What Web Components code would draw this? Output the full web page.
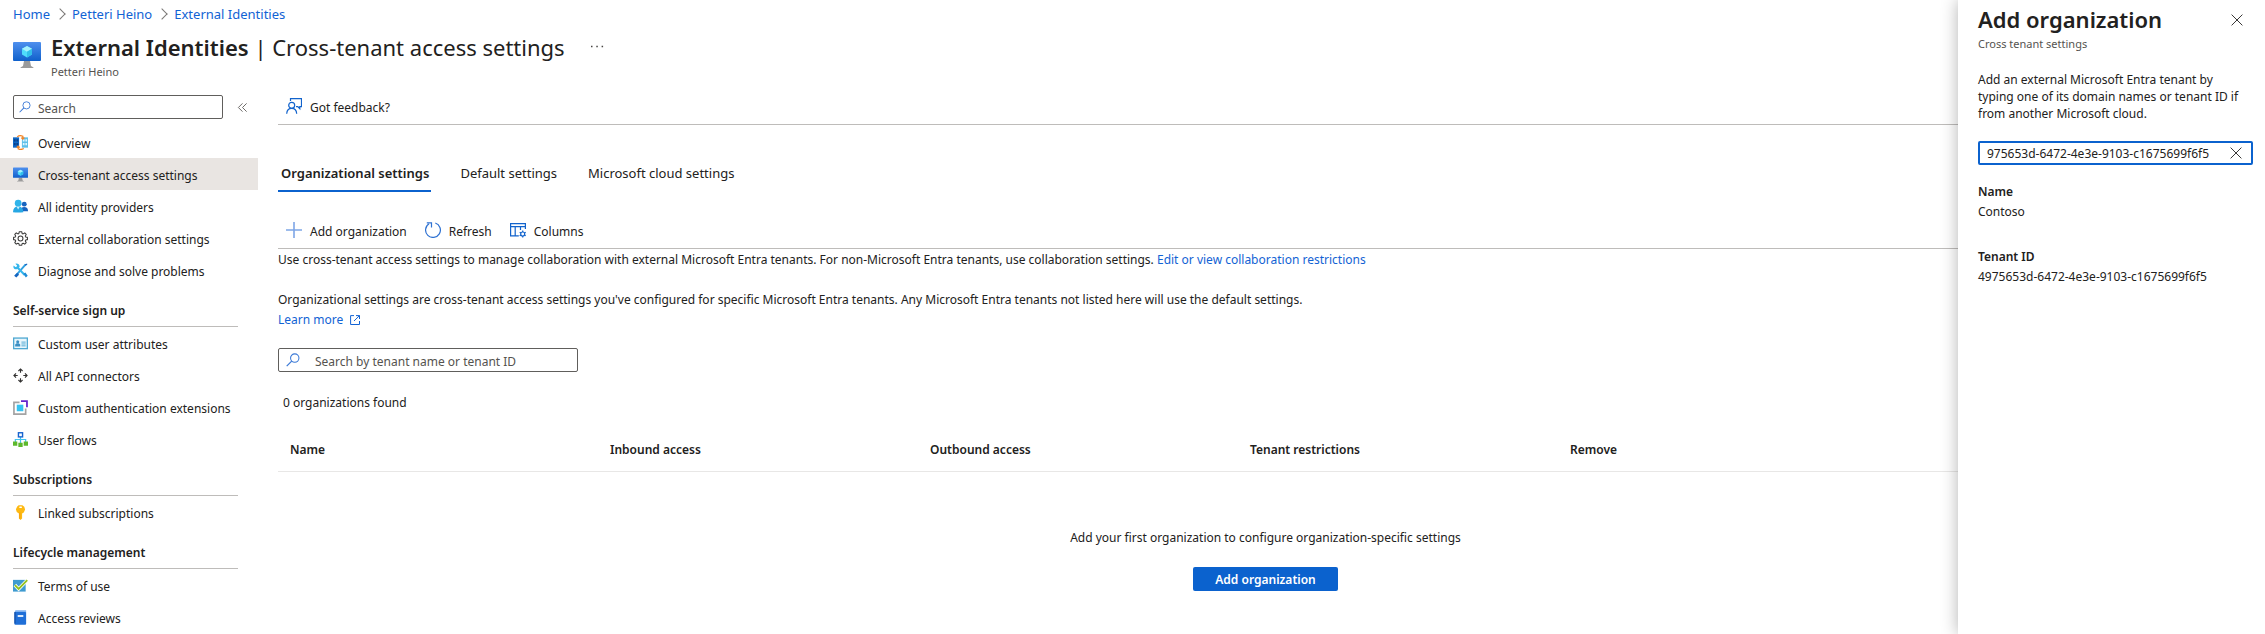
<!DOCTYPE html>
<html lang="en">
<head>
<meta charset="utf-8">
<meta name="viewport" content="width=device-width, initial-scale=1">
<title>External Identities | Cross-tenant access settings</title>
<style>
  :root { --accent: #0b62ce; --text: #222120; --muted: #55534f; --line: #bebcba; --link: #1263d4; }
  body { margin: 0; background: #fff; color: var(--text); font: 12px/20px "Noto Sans", "Open Sans", sans-serif; }
</style>
</head>
<body>
<az-portal>
  <az-breadcrumb slot="trail">
    <a href="#home">Home</a>
    <a href="#tenant">Petteri Heino</a>
    <a href="#identities">External Identities</a>
  </az-breadcrumb>

  <az-blade-header slot="header" name="External Identities" page="Cross-tenant access settings">Petteri Heino</az-blade-header>

  <az-sidebar slot="nav">
    <az-nav-item icon="overview">Overview</az-nav-item>
    <az-nav-item icon="monitor" selected>Cross-tenant access settings</az-nav-item>
    <az-nav-item icon="people">All identity providers</az-nav-item>
    <az-nav-item icon="gear">External collaboration settings</az-nav-item>
    <az-nav-item icon="tools">Diagnose and solve problems</az-nav-item>
    <az-nav-section heading="Self-service sign up">
      <az-nav-item icon="card">Custom user attributes</az-nav-item>
      <az-nav-item icon="arrows">All API connectors</az-nav-item>
      <az-nav-item icon="extension">Custom authentication extensions</az-nav-item>
      <az-nav-item icon="flow">User flows</az-nav-item>
    </az-nav-section>
    <az-nav-section heading="Subscriptions">
      <az-nav-item icon="key">Linked subscriptions</az-nav-item>
    </az-nav-section>
    <az-nav-section heading="Lifecycle management">
      <az-nav-item icon="terms">Terms of use</az-nav-item>
      <az-nav-item icon="book">Access reviews</az-nav-item>
    </az-nav-section>
  </az-sidebar>

  <az-command-bar>
    <az-command icon="feedback">Got feedback?</az-command>
  </az-command-bar>
  <az-tabs></az-tabs>
  <az-command-bar>
    <az-command icon="plus">Add organization</az-command>
    <az-command icon="refresh">Refresh</az-command>
    <az-command icon="columns">Columns</az-command>
  </az-command-bar>
  <az-organizations></az-organizations>

  <az-panel slot="panel" heading="Add organization" subheading="Cross tenant settings">
    <az-tenant-lookup></az-tenant-lookup>
    <az-field label="Name">Contoso</az-field>
    <az-field label="Tenant ID">4975653d-6472-4e3e-9103-c1675699f6f5</az-field>
  </az-panel>
</az-portal>

<script>
/* Each entry: viewBox and the shapes drawn in it. */
const ICONS = {
  'monitor': ['0 0 28 28', `
    <defs><linearGradient id="m" x1="0" y1="0" x2="0" y2="1"><stop offset="0" stop-color="#4f90ee"/><stop offset="1" stop-color="#0f60cb"/></linearGradient></defs>
    <path d="M11 20h6l1 5 2.500 1.500v.5h-13v-.5l2.500-1.500z" fill="#9b9b9b"/>
    <rect x="0" y="1" width="28" height="19" rx="1" fill="url(#m)"/>
    <path d="M14 5l5 2.800v5.800l-5 2.900-5-2.900V7.800z" fill="#4fdcfb"/>
    <path d="M14 5l5 2.800-5 2.900-5-2.900z" fill="#a6f1fd"/>
    <path d="M14 10.700l5-2.900v5.800l-5 2.900z" fill="#32bfea"/>`],
  'overview': ['0 0 16 16', `
    <rect x="0" y="2.500" width="6.500" height="11" fill="#0f67c4"/><rect x="9.500" y="2.500" width="6.500" height="11" fill="#5fbfe9"/>
    <path d="M1 4.500h1.800v2.500H1zM3.700 4.500h1.800v2.500H3.700zM1 8.500h1.800V11H1zM3.700 8.500h1.800V11H3.700z" fill="#0a3f86"/>
    <path d="M10.500 4.500h1.800v2.500h-1.800zM13.200 4.500H15v2.500h-1.800zM10.500 8.500h1.800V11h-1.800zM13.200 8.500H15V11h-1.800z" fill="#dff5fd"/>
    <path d="M4.500 2Q7 -.2 10.500 1.300V4M8.800 2.800l1.700 1.600 1.700-1.600M11.500 14.500Q8.500 16.300 5.500 14.700V12M3.800 13.500l1.700-1.700 1.700 1.700" fill="none" stroke="#f58220" stroke-width="1.300"/>`],
  'people': ['0 0 16 16', `
    <circle cx="12" cy="5.500" r="2.600" fill="#1764c0"/><path d="M8 13q0-4.500 4-4.500t4 4.500z" fill="#1764c0"/>
    <circle cx="5.500" cy="4.500" r="3.600" fill="#30b4ea"/><path d="M0 14q0-6 5.500-6T11 14q-5.500 1-11 0z" fill="#27a7e3"/>
    <path d="M3.800 8.300l1.700 3 1.700-3z" fill="#c8f0fc"/>`],
  'gear': ['0 0 16 16', `
    <path d="M6.700.7h2.600l.4 1.900 1.100.5 1.700-1.100 1.600 1.700-1 1.600.5 1.200 1.800.3v2.400l-1.800.4-.5 1.100 1 1.700-1.600 1.600-1.700-1-1.100.5-.4 1.800H6.700l-.4-1.800-1.100-.5-1.700 1-1.600-1.600 1-1.700-.5-1.100-1.800-.4V6.800l1.800-.3.500-1.200-1-1.600L3.500 2l1.700 1.100 1.100-.5z" fill="none" stroke="#3b3a39" stroke-width="1.100" stroke-linejoin="round"/>
    <circle cx="8" cy="8" r="2.600" fill="none" stroke="#3b3a39" stroke-width="1.100"/>`],
  'tools': ['0 0 16 16', `
    <path d="M13.500 1.500L3 13.500" stroke="#2f9fe0" stroke-width="2"/>
    <path d="M4.500 10.500l2 2-3 3-2.300-2z" fill="#1565c0"/>
    <path d="M4 4l8.500 8.800" stroke="#35b6ec" stroke-width="2.200"/>
    <path d="M2.500.8L4.300 2.600 4 4l-1.500.3L.8 2.600Q-.3 5 1.600 6.300 3 7 4.500 6.500L7 4.300Q7.300 2 5.700 1 4.300 0 2.500.8z" fill="#35b6ec"/>
    <path d="M11 11.500l2.200-1.300 2.500 3.300-2 2z" fill="#1d8bd6"/><path d="M12.500 1.500L15 .5l.3 1L13.500 3z" fill="#1565c0"/>`],
  'card': ['0 0 16 16', `
    <rect x=".7" y="2.200" width="14.600" height="11.300" fill="#e8f6fc" stroke="#4fa8d2" stroke-width="1.400"/>
    <circle cx="5" cy="6" r="1.600" fill="#3a8fc4"/><path d="M2.300 11.300V9l1.500-1.200h2.400L7.700 9v2.300z" fill="#3a8fc4"/>
    <path d="M9 6.500h4.500M9 8.500h4.500M9 10.500h4.500" stroke="#4fa8d2"/>`],
  'arrows': ['0 0 16 16', `
    <path d="M8 1v4M8 11v4M1 8h4M11 8h4M5.800 3.200L8 1l2.200 2.200M5.800 12.800L8 15l2.200-2.200M3.200 5.800L1 8l2.200 2.200M12.800 5.800L15 8l-2.200 2.200" fill="none" stroke="#323130" stroke-width="1.200"/>`],
  'extension': ['0 0 16 16', `
    <path d="M7 2.500H1v12.500h12.500V9" fill="none" stroke="#a3a3a3" stroke-width="1.800"/>
    <rect x="4" y="5" width="7" height="7" fill="#35c3f1"/>
    <path d="M8.500 1.200h6.400v6.600" fill="none" stroke="#6425cc" stroke-width="1.900"/>`],
  'flow': ['0 0 16 16', `
    <path d="M8 5v7M2.500 11V8h11v3" fill="none" stroke="#43c3ee" stroke-width="1.300"/>
    <rect x="5.800" y=".8" width="4.400" height="4.400" fill="#fff" stroke="#1763cf" stroke-width="1.500"/>
    <path d="M0 10h4.600v4.600H0zM5.700 11.400h4.600V16H5.700zM11.400 10H16v4.600h-4.600z" fill="#5eb82c"/>`],
  'key': ['0 0 16 16', `
    <path d="M4.500 1.500L6 .3h4l2 1.600.9 2.800L11.500 8l-1.800 1v5.500L8 16l-1.700-1.500V9L4 7.500l-.9-3z" fill="#fdb913"/>
    <rect x="6.600" y="1.700" width="3" height="1.500" rx=".7" fill="#fff"/><path d="M7.300 8v6.500" stroke="#f59a0b"/>`],
  'terms': ['0 0 16 16', `
    <rect x="0" y="2" width="13.500" height="12.500" fill="#3e9bd0"/>
    <path d="M2 7.500l4 4.200L15 2.500" fill="none" stroke="#fff" stroke-width="3.600"/>
    <path d="M2 7.500l4 4.200L15.200 2.300" fill="none" stroke="#95c11f" stroke-width="2"/>`],
  'book': ['0 0 16 16', `
    <path d="M2 1.500Q2 .3 3.300.3H14v2.500H2z" fill="#7fb1ef"/><rect x="1.500" y="2" width="12.500" height="13.700" rx="1" fill="#1f6fd8"/>
    <path d="M1.500 2v12.500h1.300V2z" fill="#154fa5"/><rect x="5" y="5.500" width="6" height="1.800" fill="#fff"/>`],
  'feedback': ['0 0 16 16', `
    <path d="M4.500 3V.7h11v8h-1.700v2l-2-2H10" fill="none" stroke="#1263cc" stroke-width="1.200"/>
    <circle cx="5.700" cy="7.300" r="3" fill="none" stroke="#1263cc" stroke-width="1.200"/>
    <path d="M.7 15.700q.3-5.300 5-5.300t5 5.300" fill="none" stroke="#1263cc" stroke-width="1.200"/>`],
  'plus': ['0 0 16 16', `<path d="M8 0v16M0 8h16" stroke="#7ea6e6" stroke-width="1.600"/>`],
  'refresh': ['0 0 16 16', `
    <path d="M10.300 1A7.400 7.400 0 1 1 4 1.800" fill="none" stroke="#2f72d2" stroke-width="1.200"/>
    <path d="M1.800.9h4.700v4.500" fill="none" stroke="#2f72d2" stroke-width="1.200"/>`],
  'columns': ['0 0 16 16', `
    <path d="M15.400 7V1.600H.6v12.300h8.200M.6 4.600h14.800M5.200 4.600v9.300M10.500 4.600V8" fill="none" stroke="#1263cc" stroke-width="1.200"/>
    <circle cx="12.700" cy="12" r="2" fill="none" stroke="#1263cc" stroke-width="1.200"/>
    <path d="M12.700 8.500V10M12.700 14v1.500M9.700 10.300l1.300.8M14.400 12.900l1.300.8M9.700 13.700l1.300-.8M14.400 11.100l1.300-.8" stroke="#1263cc" stroke-width="1.200"/>`],
  'search': ['0 0 16 16', `
    <circle cx="10" cy="5.800" r="4.800" fill="none" stroke="#3a78d6" stroke-width="1.200"/><path d="M6.500 9.300L.8 15" stroke="#3a78d6" stroke-width="1.400"/>`],
  'collapse': ['0 0 12 12', `<path d="M6 1.500L1.500 6 6 10.500M10.500 1.500L6 6l4.500 4.500" fill="none" stroke="#605e5c"/>`],
  'more': ['0 0 16 16', `<path d="M2 7.500h1.500M7.300 7.500h1.500M12.600 7.500h1.500" stroke="#484644" stroke-width="1.500"/>`],
  'close': ['0 0 16 16', `<path d="M.8.8l14.400 14.400M15.200.8L.8 15.200" stroke="#323130" stroke-width="1.300"/>`],
  'external': ['0 0 12 12', `<path d="M5 1.600H1.600v8.900h8.900V7M7 1.600h3.500V5M10.500 1.600L5 7" fill="none" stroke="#1263d4"/>`]
};

/* Registers an element whose open shadow root is cloned from a template. */
function define(tag, css, html, setup) {
  const template = document.createElement('template');
  template.innerHTML = `<style>*,:host{box-sizing:border-box} ${css}</style>${html}`;
  customElements.define(tag, class extends HTMLElement {
    constructor() {
      super();
      this.attachShadow({ mode: 'open' }).append(template.content.cloneNode(true));
    }
    connectedCallback() { if (setup) setup(this, this.shadowRoot); }
  });
}

/* Puts the icon that the host names in the place kept for it. */
function placeIcon(host, root) {
  const icon = document.createElement('az-icon');
  icon.setAttribute('name', host.getAttribute('icon'));
  root.querySelector('.icon').replaceChildren(icon);
}

define('az-icon', `:host{display:block;flex:none;width:var(--icon,16px);height:var(--icon,16px)} span,svg{display:block;width:100%;height:100%}`, `<span></span>`,
  (host, root) => {
    const [box, shapes] = ICONS[host.getAttribute('name')];
    root.querySelector('span').innerHTML = `<svg viewBox="${box}" aria-hidden="true">${shapes}</svg>`;
  });

define('az-portal', `
  :host{display:block;position:relative;min-height:100vh;overflow:hidden}
  .columns{display:grid;grid-template-columns:258px minmax(0,1fr)}
  main{padding:8px 12px 0 20px}
`, `
  <slot name="trail"></slot>
  <slot name="header"></slot>
  <div class="columns"><slot name="nav"></slot><main><slot></slot></main></div>
  <slot name="panel"></slot>
`);

define('az-breadcrumb', `
  :host{display:block;font-size:13px} ol{display:flex;align-items:center;list-style:none;margin:0;padding:4px 13px}
  li{display:flex;align-items:center}
  li + li::before{content:"";width:7px;height:7px;margin:0 8px 0 6px;border:solid #7a7876;border-width:1px 1px 0 0;rotate:45deg}
  a{color:var(--link);text-decoration:none}
`, `<nav aria-label="Breadcrumb"><ol></ol></nav>`,
  (host, root) => {
    root.querySelector('ol').replaceChildren(...[...host.querySelectorAll('a')].map(link => {
      const item = document.createElement('li');
      item.append(link.cloneNode(true));
      return item;
    }));
  });

define('az-blade-header', `
  :host{display:flex;gap:10px;padding:3px 13px 0}
  .logo{--icon:28px;margin-top:10px}
  .line{display:flex;align-items:center;gap:24px}
  h1{margin:0;font-size:22px;line-height:32px;font-weight:400;white-space:nowrap}
  h1 b{font-weight:600}
  p{margin:1px 0 0;font-size:11px;line-height:16px;color:var(--muted)}
  button{border:0;padding:0;background:none}
`, `
  <az-icon class="logo" name="monitor"></az-icon>
  <div><div class="line"><h1><b></b> | <span></span></h1>
  <button type="button" aria-label="More"><az-icon name="more"></az-icon></button></div>
  <p><slot></slot></p></div>
`, (host, root) => {
    root.querySelector('b').textContent = host.getAttribute('name');
    root.querySelector('h1 span').textContent = host.getAttribute('page');
  });

define('az-search-box', `
  :host{display:block}
  label{display:flex;align-items:center;gap:var(--search-gap,7px);height:24px;padding:0 var(--search-pad,5px);border:1px solid #605e5c;border-radius:2px}
  az-icon{--icon:var(--search-icon,12px)}
  input{flex:1;min-width:0;height:22px;border:0;padding:2px 0 0;outline:0;background:none;font:inherit;color:inherit}
  input::placeholder{color:var(--muted);opacity:1}
`, `<label><az-icon name="search"></az-icon><input type="text"></label>`,
  (host, root) => {
    const input = root.querySelector('input');
    input.placeholder = host.getAttribute('placeholder');
    input.setAttribute('aria-label', input.placeholder);
  });

define('az-sidebar', `
  :host{display:block;padding-top:15px}
  .search{display:flex;align-items:center;gap:14px;padding:0 0 7px 13px}
  az-search-box{width:210px}
  button{border:0;padding:0;background:none;--icon:11px}
`, `
  <div class="search"><az-search-box placeholder="Search"></az-search-box>
  <button type="button" aria-label="Collapse menu"><az-icon name="collapse"></az-icon></button></div>
  <nav aria-label="Blade menu"><slot></slot></nav>
`);

define('az-nav-item', `
  :host{display:block}
  a{display:flex;align-items:center;gap:10px;height:32px;padding-left:13px;color:inherit;text-decoration:none}
  :host([selected]) a{background:#e9e5e2}
  .icon{--icon:15px}
  .label{padding-top:4px}
`, `<a href="#"><span class="icon"></span><span class="label"><slot></slot></span></a>`, placeIcon);

define('az-nav-section', `
  :host{display:block}
  h2{margin:0 20px 0 13px;padding:15px 0 5px;border-bottom:1px solid var(--line);font-size:12px;line-height:20px;font-weight:600}
`, `<h2></h2><slot></slot>`,
  (host, root) => { root.querySelector('h2').textContent = host.getAttribute('heading'); });

define('az-command-bar', `
  :host{display:flex;align-items:center;gap:18px;height:37px;padding-left:8px;border-bottom:1px solid var(--line)}
`, `<slot></slot>`);

define('az-command', `
  :host{display:block}
  button{display:flex;align-items:center;gap:8px;border:0;padding:0;background:none;font:inherit;color:inherit}
  .label{padding-top:4px}
`, `<button type="button"><span class="icon"></span><span class="label"><slot></slot></span></button>`, placeIcon);

define('az-tabs', `
  :host{display:block;margin:30px 0 20px}
  div{display:flex;gap:26px}
  button{height:37px;border:0;border-bottom:2px solid transparent;padding:0 2px 0 3px;background:none;font:inherit;font-size:13px;color:inherit}
  button[aria-selected=true]{border-color:var(--accent);font-weight:600}
`, `
  <div role="tablist">
    <button type="button" role="tab" aria-selected="true">Organizational settings</button>
    <button type="button" role="tab" aria-selected="false">Default settings</button>
    <button type="button" role="tab" aria-selected="false">Microsoft cloud settings</button>
  </div>
`);

define('az-organizations', `
  :host{display:block;padding-top:1px}
  p{margin:0}
  a{color:var(--link);text-decoration:none}
  .more{display:inline-flex;align-items:center;gap:6px;--icon:12px}
  .about{margin-top:20px}
  az-search-box{width:300px;margin-top:18px;--search-pad:7px;--search-icon:14px;--search-gap:15px}
  .count{margin:21px 0 15px;padding-left:5px}
  table{width:100%;border-collapse:collapse;table-layout:fixed}
  th{height:43px;padding:2px 12px 0;border-bottom:1px solid #e8e7e6;text-align:left;font-weight:600;width:320px}
  th:last-child{width:auto}
  .empty{display:flex;flex-direction:column;align-items:center;gap:19px;padding-top:56px}
  .primary{height:24px;border:0;border-radius:2px;padding:2px 22px 0;background:var(--accent);color:#fff;font:inherit;font-weight:600}
`, `
  <p>Use cross-tenant access settings to manage collaboration with external Microsoft Entra tenants. For non-Microsoft Entra tenants, use collaboration settings. <a href="#restrictions">Edit or view collaboration restrictions</a></p>
  <p class="about">Organizational settings are cross-tenant access settings you've configured for specific Microsoft Entra tenants. Any Microsoft Entra tenants not listed here will use the default settings.</p>
  <p><a class="more" href="#learn">Learn more <az-icon name="external"></az-icon></a></p>
  <az-search-box placeholder="Search by tenant name or tenant ID"></az-search-box>
  <p class="count">0 organizations found</p>
  <table><thead><tr><th scope="col">Name</th><th scope="col">Inbound access</th><th scope="col">Outbound access</th><th scope="col">Tenant restrictions</th><th scope="col">Remove</th></tr></thead></table>
  <div class="empty"><p>Add your first organization to configure organization-specific settings</p><button class="primary" type="button">Add organization</button></div>
`);

define('az-panel', `
  :host{display:block;position:absolute;top:0;right:0;bottom:0;width:307px;padding:3px 12px 0 20px;background:#fff;box-shadow:0 0 16px rgba(0,0,0,.3)}
  header{display:flex;justify-content:space-between;align-items:center}
  h2{margin:0;font-size:22px;line-height:32px;font-weight:600}
  p{margin:1px 0 0;font-size:11px;line-height:16px;color:var(--muted)}
  button{border:0;padding:2px 10px 0 0;background:none;--icon:12px}
`, `
  <header><h2></h2><button type="button" aria-label="Close"><az-icon name="close"></az-icon></button></header>
  <p></p><slot></slot>
`, (host, root) => {
    root.querySelector('h2').textContent = host.getAttribute('heading');
    root.querySelector('p').textContent = host.getAttribute('subheading');
  });

define('az-tenant-lookup', `
  :host{display:block;margin-top:19px}
  label{display:block;padding-right:10px;line-height:17px}
  .box{display:flex;align-items:center;gap:8px;height:24px;margin-top:19px;padding:0 9px 0 7px;border:2px solid var(--accent);border-radius:2px}
  input{flex:1;min-width:0;height:20px;border:0;padding:2px 0 0;outline:0;background:none;font:inherit;color:inherit}
  button{border:0;padding:0;background:none;--icon:12px}
`, `
  <label for="tenant">Add an external Microsoft Entra tenant by typing one of its domain names or tenant ID if from another Microsoft cloud.</label>
  <div class="box"><input id="tenant" type="text" value="975653d-6472-4e3e-9103-c1675699f6f5">
  <button type="button" aria-label="Clear"><az-icon name="close"></az-icon></button></div>
`);

define('az-field', `
  :host{display:block;margin:17px 0 25px}
  dl,dd{margin:0} dt{font-weight:600}
`, `<dl><dt></dt><dd><slot></slot></dd></dl>`,
  (host, root) => { root.querySelector('dt').textContent = host.getAttribute('label'); });
</script>
</body>
</html>
